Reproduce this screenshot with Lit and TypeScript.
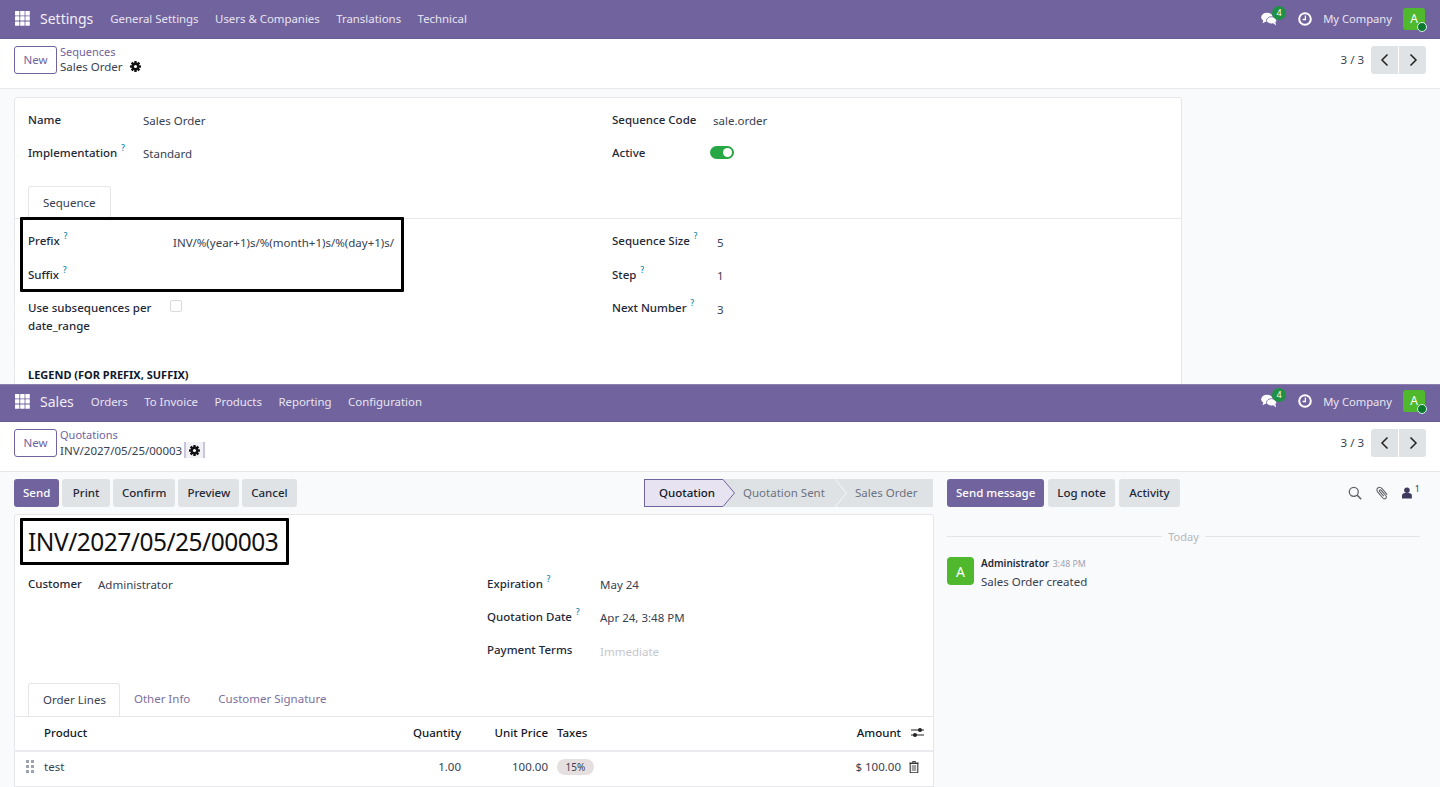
import { LitElement, html, css, svg } from 'lit';
import { customElement } from 'lit/decorators.js';

const appsIcon = html`<svg class="apps" viewBox="0 0 15 15" width="15" height="15">
  ${[0, 5.2, 10.4].map((y) => [0, 5.2, 10.4].map((x) => svg`<rect x=${x} y=${y} width="4.4" height="4.4" rx="0.5" fill="#fff"/>`))}
</svg>`;

const commentsIcon = html`<svg viewBox="0 0 16 14" width="16" height="14">
  <ellipse cx="6" cy="5.2" rx="5.8" ry="4.4" fill="#fff"/>
  <path d="M2.5 8l-1 3.2 4-2z" fill="#fff"/>
  <ellipse cx="10.5" cy="8.3" rx="5" ry="3.6" fill="#fff" stroke="#71639e" stroke-width="0.8"/>
  <path d="M12 11l3 2.4-.6-3.4z" fill="#fff"/>
</svg>`;

const clockIcon = html`<svg viewBox="0 0 14 14" width="14" height="14">
  <circle cx="7" cy="7" r="5.8" fill="none" stroke="#fff" stroke-width="2"/>
  <path d="M7.4 3.6v3.9H4.6" fill="none" stroke="#fff" stroke-width="1.3"/>
</svg>`;

const gearIcon = html`<svg viewBox="0 0 12 12" width="11" height="11">
  ${[0, 45, 90, 135].map((a) => svg`<rect x="4.6" y="0" width="2.8" height="12" rx="0.5" fill="#111" transform="rotate(${a} 6 6)"/>`)}
  <circle cx="6" cy="6" r="4.2" fill="#111"/>
  <circle cx="6" cy="6" r="1.7" fill="#fff"/>
</svg>`;

const pager = html`<div class="pager">
  <span class="pager-text">3 / 3</span>
  <div class="pager-btns">
    <button class="pager-btn"><svg viewBox="0 0 10 14" width="10" height="14"><path d="M7.5 1.5L2 7l5.5 5.5" fill="none" stroke="#222" stroke-width="1.5"/></svg></button>
    <button class="pager-btn"><svg viewBox="0 0 10 14" width="10" height="14"><path d="M2.5 1.5L8 7l-5.5 5.5" fill="none" stroke="#222" stroke-width="1.5"/></svg></button>
  </div>
</div>`;

const help = html`<sup class="help">?</sup>`;

function navbar(brand: string, items: string[], tall: boolean) {
  return html`<header class="navbar ${tall ? 'tall' : ''}">
    ${appsIcon}
    <span class="brand">${brand}</span>
    <nav class="menu">${items.map((i) => html`<span>${i}</span>`)}</nav>
    <div class="systray">
      <span class="chat">${commentsIcon}<b class="badge">4</b></span>
      ${clockIcon}
      <span class="company">My Company</span>
      <span class="me">A<i class="dot"></i></span>
    </div>
  </header>`;
}

function row(label: string, value: string, hasHelp = false) {
  return html`<div class="row">
    <label>${label}${hasHelp ? help : ''}</label>
    <span class="val">${value}</span>
  </div>`;
}

@customElement('app-root')
export class AppRoot extends LitElement {
  static styles = css`
    :host {
      display: block;
      width: 1440px;
      height: 787px;
      overflow: hidden;
      background: #f9fafb;
      font-family: 'Noto Sans', sans-serif;
      font-size: 11.5px;
      color: #374151;
    }
    * { box-sizing: border-box; }

    .navbar {
      height: 39px;
      background: #71639e;
      display: flex;
      align-items: center;
      padding: 0 15px 1px;
      color: #fff;
      border-bottom: 1px solid #6a5c96;
    }
    .navbar.tall { height: 37px; padding-bottom: 4px; }
    .brand { font-size: 14px; margin-left: 10px; color: #f1eff6; }
    .menu { display: flex; gap: 16.5px; margin-left: 17px; font-size: 11.4px; color: #e8e5f0; }
    .systray { margin-left: auto; display: flex; align-items: center; }
    .chat { position: relative; display: flex; margin-right: 21px; }
    .badge {
      position: absolute;
      top: -6px;
      left: 11px;
      width: 14px;
      height: 14px;
      border-radius: 50%;
      background: #1f9146;
      font-size: 9px;
      font-weight: 400;
      text-align: center;
      line-height: 14px;
    }
    .company { margin-left: 11px; font-size: 11.2px; color: #e8e5f0; }
    .me {
      position: relative;
      width: 22px;
      height: 22px;
      margin-left: 11px;
      background: #4fb82d;
      border-radius: 3px;
      text-align: center;
      line-height: 22px;
      font-size: 12px;
    }
    .dot {
      position: absolute;
      right: -2px;
      bottom: -2px;
      width: 10px;
      height: 10px;
      border-radius: 50%;
      background: #0b7a2f;
      border: 1px solid #d8f0ea;
    }

    .panel { position: relative; overflow: hidden; }
    .top-panel { height: 384px; }
    .bottom-panel { height: 403px; border-top: 1px solid #8d80b0; }

    .control {
      height: 50px;
      background: #fff;
      border-bottom: 1px solid #e5e7eb;
      display: flex;
      align-items: flex-start;
      padding: 7px 14px 0;
    }
    .btn-new {
      width: 43px;
      height: 28px;
      border: 1px solid #71639e;
      border-radius: 3px;
      background: #fff;
      color: #71639e;
      font: inherit;
      padding: 0 0 2px;
    }
    .crumbs { margin: -2px 0 0 3px; line-height: 15px; }
    .crumbs .parent { color: #71639e; font-size: 11px; }
    .crumbs .current { display: flex; align-items: center; color: #374151; }
    .gear { margin-left: 7px; display: flex; }
    .gear.boxed {
      margin-left: 2px;
      padding: 0 3px;
      height: 16px;
      align-items: center;
      border-left: 2px solid #c9c5dc;
      border-right: 2px solid #c9c5dc;
      background: #f1f1f6;
    }
    .pager { margin-left: auto; display: flex; align-items: center; gap: 7px; }
    .pager-text { margin-top: -2px; }
    .pager-btns { display: flex; gap: 1px; }
    .pager-btn {
      width: 27px;
      height: 28px;
      border: 0;
      padding: 0;
      background: #e0e3e6;
      display: flex;
      align-items: center;
      justify-content: center;
    }
    .pager-btn:first-child { border-radius: 3px 0 0 3px; }
    .pager-btn:last-child { border-radius: 0 3px 3px 0; }

    .sheet {
      background: #fff;
      border: 1px solid #e5e7eb;
      border-radius: 3px 3px 0 0;
    }
    .seq-sheet {
      width: 1168px;
      margin: 8px 0 0 14px;
      height: 340px;
      padding-top: 5px;
    }
    .cols { display: grid; padding-left: 13px; }
    .seq-cols { grid-template-columns: 584px 1fr; }
    .row {
      display: grid;
      height: 33.4px;
      align-items: start;
      padding-top: 7.5px;
      line-height: 17px;
    }
    label { color: #1f2937; font-weight: 500; }
    .val { padding-top: 1.5px; }
    .help { color: #0180a5; font-size: 8px; line-height: 0; margin-left: 4px; vertical-align: 6px; }
    .w115 .row { grid-template-columns: 115px 1fr; }
    .w101 .row { grid-template-columns: 101px 1fr; }
    .w105 .row { grid-template-columns: 105px 1fr; }
    .w145 .row { grid-template-columns: 145px 1fr; }
    .w70 .row { grid-template-columns: 70px 1fr; }
    .w113 .row { grid-template-columns: 113px 1fr; }
    .toggle {
      width: 24px;
      height: 13px;
      margin-left: -3px;
      margin-top: 2.5px;
      border-radius: 7px;
      background: #28a745;
      display: flex;
      justify-content: flex-end;
      align-items: center;
      padding-right: 2px;
    }
    .toggle i { width: 9px; height: 9px; border-radius: 50%; background: #fff; }

    .tabs {
      display: flex;
      padding-left: 13px;
      border-bottom: 1px solid #e5e7eb;
    }
    .tab { height: 33px; line-height: 31px; padding: 0 14px; color: #7c6f9e; }
    .tab.active {
      color: #374151;
      background: #fff;
      border: 1px solid #e5e7eb;
      border-bottom: 0;
      border-radius: 3px 3px 0 0;
      margin-bottom: -1px;
      padding-right: 13px;
    }
    .seq-tabs { margin-top: 16px; }
    .seq-tabs .tab.active { padding-right: 14px; }
    .seq-body { padding-top: 6px; }
    .wrap-row { height: 50px; }
    .wrap-row label { width: 130px; line-height: 18px; }
    .check {
      width: 12px;
      height: 12px;
      margin: 1px 0 0 -3px;
      border: 1px solid #d8dadd;
      border-radius: 2px;
      background: #fff;
    }
    .legend { margin: 25px 0 0 13px; font-weight: 700; color: #111827; font-size: 11px; }

    .mark {
      position: absolute;
      border: 3px solid #000;
      border-radius: 1px;
      pointer-events: none;
    }
    .mark-prefix { left: 20px; top: 217px; width: 384px; height: 75px; }
    .mark-title { left: 20px; top: 133px; width: 269px; height: 47px; }

    .work { display: grid; grid-template-columns: 934px 1fr; }
    .main { padding: 7px 0 0 14px; }
    .actions { display: flex; align-items: center; justify-content: space-between; height: 28px; }
    .btns { display: flex; gap: 3px; }
    .chat-head .btns { gap: 4px; }
    .btn {
      height: 28px;
      padding: 0 9px 2px;
      border: 0;
      border-radius: 3px;
      background: #e0e3e6;
      color: #1f2937;
      font: inherit;
      font-weight: 500;
    }
    .btn.wide { padding: 0 10.5px 2px; }
    .btn.primary { background: #71639e; color: #fff; }
    .status { display: flex; height: 28px; margin-right: 1px; background: #dfe2e5; color: #6b7280; }
    .stage { display: flex; align-items: center; padding-bottom: 2px; }
    .stage.current {
      width: 79px;
      padding-left: 14px;
      background: #e7e3f0;
      border: 1px solid #71639e;
      border-right: 0;
      color: #111827;
      font-weight: 500;
    }
    .stage.sent { width: 100px; padding-left: 8px; }
    .stage.done { width: 86px; padding-left: 8px; }
    .arrow { display: block; }

    .order-sheet { margin-top: 7px; height: 280px; }
    .title {
      height: 52px;
      padding: 12px 0 0 13px;
      font-size: 24.5px;
      letter-spacing: -0.5px;
      line-height: 30px;
      color: #111;
    }
    .order-cols { grid-template-columns: 459px 1fr; height: 116px; }
    .muted { color: #c4c7cc; }
    table { width: 100%; border-collapse: collapse; table-layout: fixed; }
    th { height: 34px; font-weight: 500; color: #111827; text-align: left; border-bottom: 2px solid #e9ebee; padding: 0 0 2px; }
    td { height: 35px; padding: 0 0 4px; border-bottom: 1px solid #e5e7eb; }
    .r { text-align: right; }
    .pl { padding-left: 9px; }
    .grip { display: grid; grid-template-columns: 3px 3px; gap: 2px; width: 8px; margin-left: 11px; }
    .grip i { width: 3px; height: 3px; background: #9ca3af; }
    .chip {
      display: inline-block;
      padding: 0 8.5px;
      height: 16px;
      line-height: 16px;
      border-radius: 8px;
      background: #e6dfdf;
      font-size: 10px;
    }
    .cell-icon { display: flex; justify-content: center; }
    .cell-icon.trash { padding-right: 7px; }

    .chatter { padding: 7px 20px 0 13px; }
    .chat-head { display: flex; justify-content: space-between; align-items: center; height: 28px; }
    .tools { display: flex; align-items: center; gap: 13px; }
    .followers { display: flex; width: 18px; }
    .followers sup { font-size: 9px; line-height: 0; margin: 2px 0 0 3px; }
    .day {
      display: flex;
      align-items: center;
      gap: 6px;
      margin-top: 20px;
      color: #b4b8be;
      font-size: 11px;
      height: 18px;
    }
    .day::before, .day::after { content: ''; flex: 1; height: 1px; background: #e3e5e8; }
    .msg { display: flex; gap: 7px; margin-top: 12px; }
    .avatar {
      width: 27px;
      height: 28px;
      border-radius: 4px;
      background: #4fb82d;
      color: #fff;
      font-size: 14px;
      display: flex;
      align-items: center;
      justify-content: center;
    }
    .msg-body { margin-top: -2px; }
    .author { font-weight: 600; font-size: 10px; line-height: 16px; color: #1f2937; }
    .time { font-weight: 400; font-size: 8.8px; color: #9ca3af; margin-left: 1px; }
    .text { line-height: 19px; }
  `;

  render() {
    return html`
      <section class="panel top-panel">
        ${navbar('Settings', ['General Settings', 'Users & Companies', 'Translations', 'Technical'], false)}
        <div class="control">
          <button class="btn-new">New</button>
          <div class="crumbs">
            <div class="parent">Sequences</div>
            <div class="current">Sales Order<span class="gear">${gearIcon}</span></div>
          </div>
          ${pager}
        </div>
        <div class="sheet seq-sheet">
          <div class="cols seq-cols">
            <div class="w115">
              ${row('Name', 'Sales Order')}
              ${row('Implementation', 'Standard', true)}
            </div>
            <div class="w101">
              ${row('Sequence Code', 'sale.order')}
              <div class="row"><label>Active</label><span class="toggle"><i></i></span></div>
            </div>
          </div>
          <div class="tabs seq-tabs"><div class="tab active">Sequence</div></div>
          <div class="cols seq-cols seq-body">
            <div class="w145">
              ${row('Prefix', 'INV/%(year+1)s/%(month+1)s/%(day+1)s/', true)}
              ${row('Suffix', '', true)}
              <div class="row wrap-row"><label>Use subsequences per date_range</label><span class="check"></span></div>
            </div>
            <div class="w105">
              ${row('Sequence Size', '5', true)}
              ${row('Step', '1', true)}
              ${row('Next Number', '3', true)}
            </div>
          </div>
          <div class="legend">LEGEND (FOR PREFIX, SUFFIX)</div>
        </div>
        <div class="mark mark-prefix"></div>
      </section>

      <section class="panel bottom-panel">
        ${navbar('Sales', ['Orders', 'To Invoice', 'Products', 'Reporting', 'Configuration'], true)}
        <div class="control">
          <button class="btn-new">New</button>
          <div class="crumbs">
            <div class="parent">Quotations</div>
            <div class="current">INV/2027/05/25/00003<span class="gear boxed">${gearIcon}</span></div>
          </div>
          ${pager}
        </div>
        <div class="work">
          <div class="main">
            <div class="actions">
              <div class="btns">
                <button class="btn primary">Send</button>
                <button class="btn wide">Print</button>
                <button class="btn">Confirm</button>
                <button class="btn">Preview</button>
                <button class="btn">Cancel</button>
              </div>
              <div class="status">
                <div class="stage current">Quotation</div>
                <svg class="arrow" viewBox="0 0 12 28" width="12" height="28"><path d="M0 .5L11.5 14 0 27.5z" fill="#e7e3f0"/><path d="M0 .5L11.5 14 0 27.5" fill="none" stroke="#71639e"/></svg>
                <div class="stage sent">Quotation Sent</div>
                <svg class="arrow" viewBox="0 0 12 28" width="12" height="28"><path d="M0 0l11.5 14L0 28" fill="none" stroke="#f5f6f7"/></svg>
                <div class="stage done">Sales Order</div>
              </div>
            </div>
            <div class="sheet order-sheet">
              <div class="title">INV/2027/05/25/00003</div>
              <div class="cols order-cols">
                <div class="w70">${row('Customer', 'Administrator')}</div>
                <div class="w113">
                  ${row('Expiration', 'May 24', true)}
                  ${row('Quotation Date', 'Apr 24, 3:48 PM', true)}
                  <div class="row"><label>Payment Terms</label><span class="val muted">Immediate</span></div>
                </div>
              </div>
              <div class="tabs">
                <div class="tab active">Order Lines</div>
                <div class="tab">Other Info</div>
                <div class="tab">Customer Signature</div>
              </div>
              <table>
                <colgroup>
                  <col style="width:29px" /><col style="width:337px" /><col style="width:80px" />
                  <col style="width:87px" /><col style="width:60px" /><col style="width:293px" /><col />
                </colgroup>
                <thead>
                  <tr>
                    <th></th><th>Product</th><th class="r">Quantity</th><th class="r">Unit Price</th>
                    <th class="pl">Taxes</th><th class="r">Amount</th>
                    <th><div class="cell-icon">
                      <svg viewBox="0 0 13 11" width="13" height="11"><path d="M0 3h13M0 8h13" stroke="#222" stroke-width="1.2"/><circle cx="9" cy="3" r="2" fill="#222"/><circle cx="4" cy="8" r="2" fill="#222"/></svg>
                    </div></th>
                  </tr>
                </thead>
                <tbody>
                  <tr>
                    <td><div class="grip">${[1, 2, 3, 4, 5, 6].map(() => html`<i></i>`)}</div></td>
                    <td>test</td><td class="r">1.00</td><td class="r">100.00</td>
                    <td class="pl"><span class="chip">15%</span></td><td class="r">$ 100.00</td>
                    <td><div class="cell-icon trash">
                      <svg viewBox="0 0 10 12" width="10" height="12"><path d="M3.5 1.5V.6h3v.9M.3 2h9.4" stroke="#333" fill="none"/><path d="M1.2 2.5h7.6V11a.8.8 0 0 1-.8.8H2a.8.8 0 0 1-.8-.8z" fill="none" stroke="#333" stroke-width="1.1"/><path d="M2.8 5h4.4M2.8 7h4.4M2.8 9h4.4" stroke="#333" stroke-width=".9"/></svg>
                    </div></td>
                  </tr>
                </tbody>
              </table>
            </div>
          </div>
          <aside class="chatter">
            <div class="chat-head">
              <div class="btns">
                <button class="btn primary">Send message</button>
                <button class="btn">Log note</button>
                <button class="btn wide">Activity</button>
              </div>
              <div class="tools">
                <svg viewBox="0 0 14 14" width="14" height="14"><circle cx="5.8" cy="5.8" r="4.5" fill="none" stroke="#5f6368" stroke-width="1.3"/><path d="M9 9l4.2 4.2" stroke="#5f6368" stroke-width="1.6"/></svg>
                <svg viewBox="0 0 14 14" width="14" height="14"><path d="M12.2 8.6L7 2.6C5.8 1.2 4 1 2.8 2s-1.2 2.8 0 4.2l5 5.8c.9 1 2.1 1.1 2.9.4s.8-1.9 0-2.9L6.2 4.3c-.5-.5-1.1-.6-1.5-.2s-.4 1 .1 1.5l4 4.6" fill="none" stroke="#5f6368" stroke-width="1.1"/></svg>
                <span class="followers">
                  <svg viewBox="0 0 10 12" width="10" height="12"><circle cx="5" cy="3.2" r="2.8" fill="#3f3a5c"/><path d="M0 11.5V8.6C0 7 1.4 6 3 6h4c1.6 0 3 1 3 2.6v2.9z" fill="#3f3a5c"/></svg>
                  <sup>1</sup>
                </span>
              </div>
            </div>
            <div class="day">Today</div>
            <div class="msg">
              <div class="avatar">A</div>
              <div class="msg-body">
                <div class="author">Administrator <span class="time">3:48 PM</span></div>
                <div class="text">Sales Order created</div>
              </div>
            </div>
          </aside>
        </div>
        <div class="mark mark-title"></div>
      </section>
    `;
  }
}
